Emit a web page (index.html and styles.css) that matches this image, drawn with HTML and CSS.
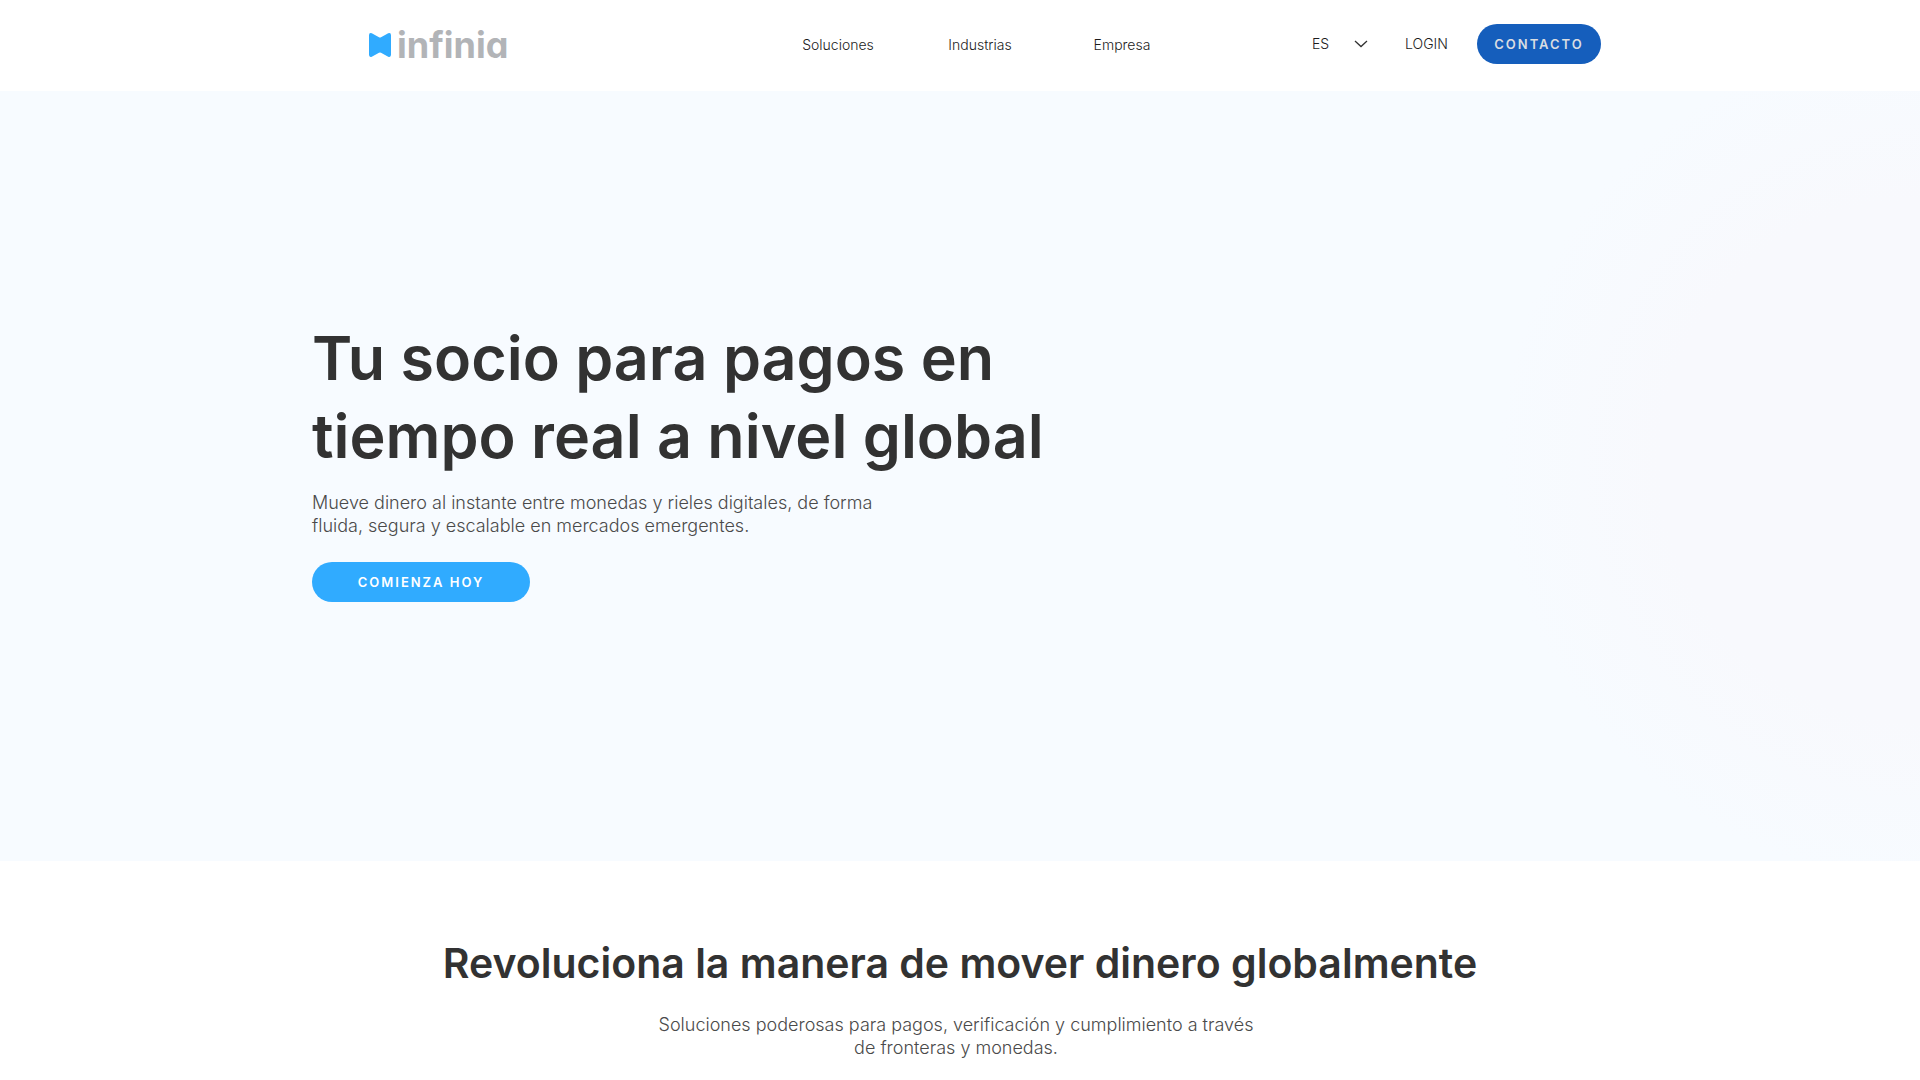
FILE: index.html
```html
<!DOCTYPE html>
<html lang="es">
<head>
<meta charset="utf-8">
<meta name="viewport" content="width=device-width, initial-scale=1">
<title>infinia</title>
<link rel="stylesheet" href="styles.css">
</head>
<body>
<header class="site-header">
  <div class="container header-row">
    <a class="logo" href="#" aria-label="infinia">
      <svg class="logo-mark" viewBox="0 0 22 24" aria-hidden="true"><path d="M0 2.200Q0-.6 2.800.3L10 4.200Q11 4.700 12 4.200L19.200.3Q22-.6 22 2.200V21.800Q22 24.600 19.200 23.700L12 19.800Q11 19.300 10 19.800L2.800 23.700Q0 24.600 0 21.800Z"/></svg>
      <span class="logo-text">infinia</span>
    </a>
    <nav class="main-nav" aria-label="Principal">
      <a href="#">Soluciones</a>
      <a href="#">Industrias</a>
      <a href="#">Empresa</a>
    </nav>
    <div class="header-actions">
      <select class="language" aria-label="Idioma">
        <option>ES</option>
        <option>EN</option>
      </select>
      <a class="login" href="#">LOGIN</a>
      <button class="button button-contact" type="button">CONTACTO</button>
    </div>
  </div>
</header>
<main>
  <section class="hero">
    <div class="container">
      <h1>Tu socio para pagos en<br>tiempo real a nivel global</h1>
      <p class="lead">Mueve dinero al instante entre monedas y rieles digitales, de forma<br>fluida, segura y escalable en mercados emergentes.</p>
      <button class="button button-start" type="button">COMIENZA HOY</button>
    </div>
  </section>
  <section class="intro">
    <h2>Revoluciona la manera de mover dinero globalmente</h2>
    <p class="lead">Soluciones poderosas para pagos, verificación y cumplimiento a través<br>de fronteras y monedas.</p>
  </section>
</main>
</body>
</html>
```
FILE: styles.css
```css
* {
  box-sizing: border-box;
}

body {
  margin: 0;
  background: #fff;
  color: #323232;
  font-family: Inter, "Open Sans", sans-serif;
}

h1, h2, p {
  margin: 0;
}

a {
  color: inherit;
  text-decoration: none;
}

.container {
  max-width: 1296px;
  margin: 0 auto;
}

.site-header {
  padding: 24px 0 27px;
}

.header-row {
  display: flex;
  align-items: center;
  padding: 0 7px 0 57px;
  color: #1c1c1c;
  font-size: 14px;
  font-weight: 300;
  line-height: 20px;
}

.logo {
  display: flex;
  align-items: center;
  gap: 6px;
  height: 40px;
  padding-top: 2px;
}

.logo-mark {
  width: 22px;
  height: 24px;
  fill: #30abff;
}

.logo-text {
  color: #b2b4b7;
  font-size: 36px;
  font-weight: 700;
  line-height: 38px;
  font-feature-settings: "cv11";
}

.main-nav {
  display: grid;
  grid-template-columns: repeat(3, 142px);
  margin: 2px 119px 0 auto;
  text-align: center;
}

.header-actions {
  display: flex;
  align-items: center;
}

.language {
  width: 56px;
  margin-right: 37px;
  padding: 0;
  border: 0;
  appearance: none;
  color: inherit;
  font: inherit;
  background: url("data:image/svg+xml,%3Csvg xmlns='http://www.w3.org/2000/svg' width='14' height='8' fill='none' stroke='%23323232' stroke-width='1.300'%3E%3Cpath d='M1 1l6 5.500L13 1'/%3E%3C/svg%3E") no-repeat right center;
}

.login {
  width: 45px;
  margin-right: 27px;
}

.button {
  height: 40px;
  padding: 0;
  border: 0;
  border-radius: 20px;
  font: 600 13px/20px Inter, "Open Sans", sans-serif;
  letter-spacing: 2px;
}

.button-contact {
  width: 124px;
  background: #155ebc;
  color: #d9dde2;
}

.button-start {
  width: 218px;
  margin-top: 25px;
  background: #30abff;
  color: #fff;
}

.hero {
  min-height: 770px;
  padding: 228px 0 256px;
  background: radial-gradient(circle at 100% 48%, #f8f9fd 260px, #f7fbff 420px);
}

h1 {
  font-size: 61px;
  font-weight: 600;
  line-height: 78px;
}

.lead {
  color: #4a4a4a;
  font-size: 18px;
  font-weight: 300;
  line-height: 23px;
}

.hero .lead {
  margin-top: 16px;
}

.intro {
  padding: 76px 24px 12px;
  text-align: center;
}

h2 {
  font-size: 41px;
  font-weight: 600;
  line-height: 52px;
}

.intro .lead {
  margin: 24px 8px 0 0;
}
```
